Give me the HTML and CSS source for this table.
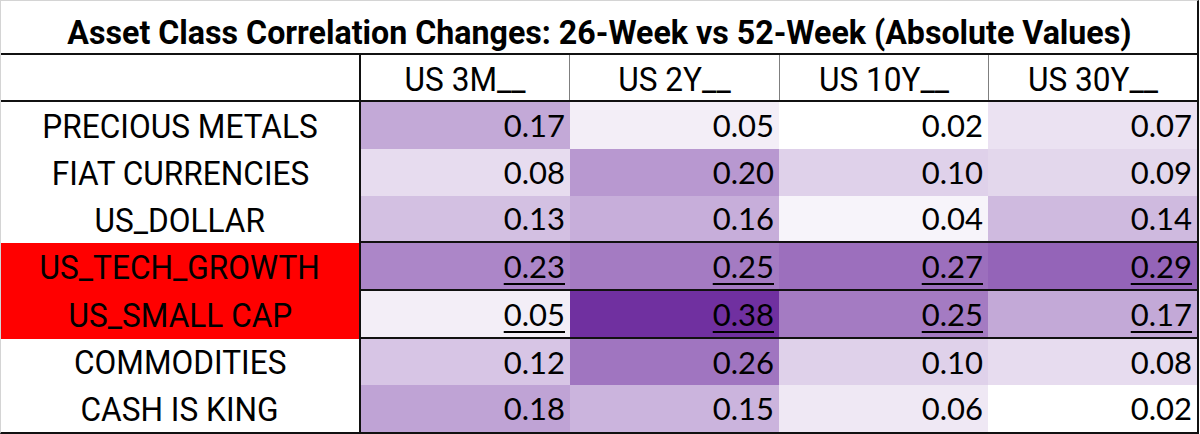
FILE: index.html
```html
<!DOCTYPE html>
<html>
<head>
<meta charset="utf-8">
<link rel="stylesheet" href="styles.css">
</head>
<body>
<div class="sheet">
  <div class="title"><span class="title-text">Asset Class Correlation Changes: 26-Week vs 52-Week (Absolute Values)</span></div>
  <div class="row head">
    <div class="label"></div>
    <div class="vals">
      <div class="hcell"><span class="cond">US 3M__</span></div>
      <div class="hcell"><span class="cond">US 2Y__</span></div>
      <div class="hcell"><span class="cond">US 10Y__</span></div>
      <div class="hcell"><span class="cond">US 30Y__</span></div>
    </div>
  </div>
  <div class="row r47">
    <div class="label"><span class="cond">PRECIOUS METALS</span></div>
    <div class="vals">
      <div class="num" style="background:#c3a9d7">0.17</div>
      <div class="num" style="background:#f3eef7">0.05</div>
      <div class="num" style="background:#ffffff">0.02</div>
      <div class="num" style="background:#ebe2f2">0.07</div>
    </div>
  </div>
  <div class="row r47">
    <div class="label"><span class="cond">FIAT CURRENCIES</span></div>
    <div class="vals">
      <div class="num" style="background:#e7dcef">0.08</div>
      <div class="num" style="background:#b898d0">0.20</div>
      <div class="num" style="background:#dfd1ea">0.10</div>
      <div class="num" style="background:#e3d7ec">0.09</div>
    </div>
  </div>
  <div class="row r47 line-below">
    <div class="label"><span class="cond">US_DOLLAR</span></div>
    <div class="vals">
      <div class="num" style="background:#d3c0e2">0.13</div>
      <div class="num" style="background:#c7aeda">0.16</div>
      <div class="num" style="background:#f7f4fa">0.04</div>
      <div class="num" style="background:#cfbadf">0.14</div>
    </div>
  </div>
  <div class="row r48 line-below hot">
    <div class="label"><span class="cond">US_TECH_GROWTH</span></div>
    <div class="vals">
      <div class="num" style="background:#ac86c8"><u>0.23</u></div>
      <div class="num" style="background:#a47bc2"><u>0.25</u></div>
      <div class="num" style="background:#9c6fbd"><u>0.27</u></div>
      <div class="num" style="background:#9464b8"><u>0.29</u></div>
    </div>
  </div>
  <div class="row r48 line-below hot">
    <div class="label"><span class="cond">US_SMALL CAP</span></div>
    <div class="vals">
      <div class="num" style="background:#f3eef7"><u>0.05</u></div>
      <div class="num" style="background:#7030a0"><u>0.38</u></div>
      <div class="num" style="background:#a47bc2"><u>0.25</u></div>
      <div class="num" style="background:#c3a9d7"><u>0.17</u></div>
    </div>
  </div>
  <div class="row r46">
    <div class="label"><span class="cond">COMMODITIES</span></div>
    <div class="vals">
      <div class="num" style="background:#d7c5e5">0.12</div>
      <div class="num" style="background:#a075c0">0.26</div>
      <div class="num" style="background:#dfd1ea">0.10</div>
      <div class="num" style="background:#e7dcef">0.08</div>
    </div>
  </div>
  <div class="row r47">
    <div class="label"><span class="cond">CASH IS KING</span></div>
    <div class="vals">
      <div class="num" style="background:#bfa3d5">0.18</div>
      <div class="num" style="background:#cbb4dd">0.15</div>
      <div class="num" style="background:#efe8f4">0.06</div>
      <div class="num" style="background:#ffffff">0.02</div>
    </div>
  </div>
</div>
</body>
</html>
```

FILE: styles.css
```css
* { box-sizing: border-box; }
html, body { margin: 0; padding: 0; background: #ffffff; }

.sheet {
  width: 1199px;
  height: 434px;
  border-left: 1px solid #d4d4d4;
  border-top: 1px solid #d4d4d4;
  border-right: 2px solid #111111;
  border-bottom: 2px solid #111111;
  display: flex;
  flex-direction: column;
  color: #000000;
}

.title {
  height: 54px;
  flex: none;
  border-bottom: 2px solid #111111;
  text-align: center;
  padding-top: 14px;
  font-family: Roboto, "Liberation Sans", sans-serif;
  font-weight: 700;
  font-size: 34px;
  line-height: 34px;
  white-space: nowrap;
}
.title-text {
  display: inline-block;
  transform: scaleX(0.946);
}

.row {
  display: flex;
  flex: none;
}
.head { height: 47px; border-bottom: 2px solid #111111; }
.r46 { height: 46px; }
.r47 { height: 47px; }
.r48 { height: 48px; }

.label {
  width: 360px;
  flex: none;
  border-right: 2px solid #111111;
  display: flex;
  align-items: center;
  justify-content: center;
  font-family: Roboto, "Liberation Sans", sans-serif;
  font-size: 34px;
  line-height: 34px;
  white-space: nowrap;
}
.hot .label { background: #ff0000; }

.cond {
  display: inline-block;
  transform: scaleX(0.93);
}

.vals {
  flex: 1;
  display: flex;
}
.line-below .vals { border-bottom: 2px solid #111111; }

.hcell {
  flex: 1;
  display: flex;
  align-items: center;
  justify-content: center;
  font-family: Roboto, "Liberation Sans", sans-serif;
  font-size: 34px;
  line-height: 34px;
  white-space: nowrap;
  padding-top: 2px;
}
.hcell + .hcell { border-left: 1px solid #7f7f7f; }

.num {
  flex: 1;
  display: flex;
  align-items: center;
  justify-content: flex-end;
  padding-right: 5px;
  font-family: Lato, "Liberation Sans", sans-serif;
  font-size: 31px;
  line-height: 31px;
}
.num u {
  text-decoration: underline;
  text-decoration-thickness: 2px;
  text-underline-offset: 5px;
}
```
